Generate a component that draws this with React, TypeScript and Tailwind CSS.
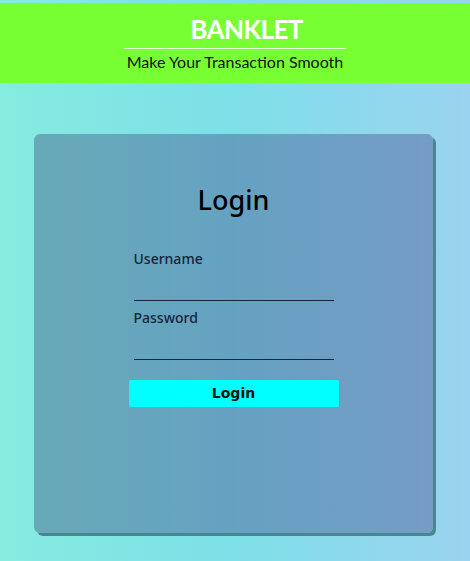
export default function App() {
  return (
    <div className="min-h-[561px] w-full bg-gradient-to-r from-[#86ecdf] via-[#7ddfe8] to-[#9ad3ef] pt-[3px] pb-[25px]">
      <header className="flex h-[80px] flex-col items-center bg-[#77ff33] pt-[11px] font-['Lato','Liberation_Sans',sans-serif]">
        <h1 className="pl-[23px] text-[26px] leading-[31px] font-bold tracking-[-0.6px] text-white">BANKLET</h1>
        <div className="mt-[3px] h-px w-[222px] bg-white/80" />
        <p className="mt-[3px] text-[16px] leading-[20px] text-[#111]">Make Your Transaction Smooth</p>
      </header>

      <main className="ml-[34px] mt-[51px] flex h-[399px] w-[399px] flex-col items-center rounded-[6px] bg-gradient-to-r from-[#68a9b7] via-[#65a2c2] to-[#759cc5] shadow-[3px_3px_0_#4a8690] font-['Noto_Sans','Open_Sans',sans-serif]">
        <h2 className="mt-[48px] text-[27px] leading-[36px] font-medium text-black">Login</h2>
        <form className="mt-[31px] flex w-[210px] flex-col items-center" onSubmit={(e) => e.preventDefault()}>
          <label className="w-[200px]">
            <span className="block text-[14px] leading-[20px] font-medium text-[#13253a]">Username</span>
            <input type="text" className="mt-[10px] block h-[22px] w-[200px] border-b border-[#13253a] bg-transparent outline-none" />
          </label>
          <label className="mt-[7px] w-[200px]">
            <span className="block text-[14px] leading-[20px] font-medium text-[#13253a]">Password</span>
            <input type="password" className="mt-[10px] block h-[22px] w-[200px] border-b border-[#13253a] bg-transparent outline-none" />
          </label>
          <button type="submit" className="mt-[20px] h-[27px] w-[210px] rounded-[2px] bg-[#00ffff] text-[14px] font-bold text-[#111] font-['DejaVu_Sans','Liberation_Sans',sans-serif]">
            Login
          </button>
        </form>
      </main>
    </div>
  );
}
